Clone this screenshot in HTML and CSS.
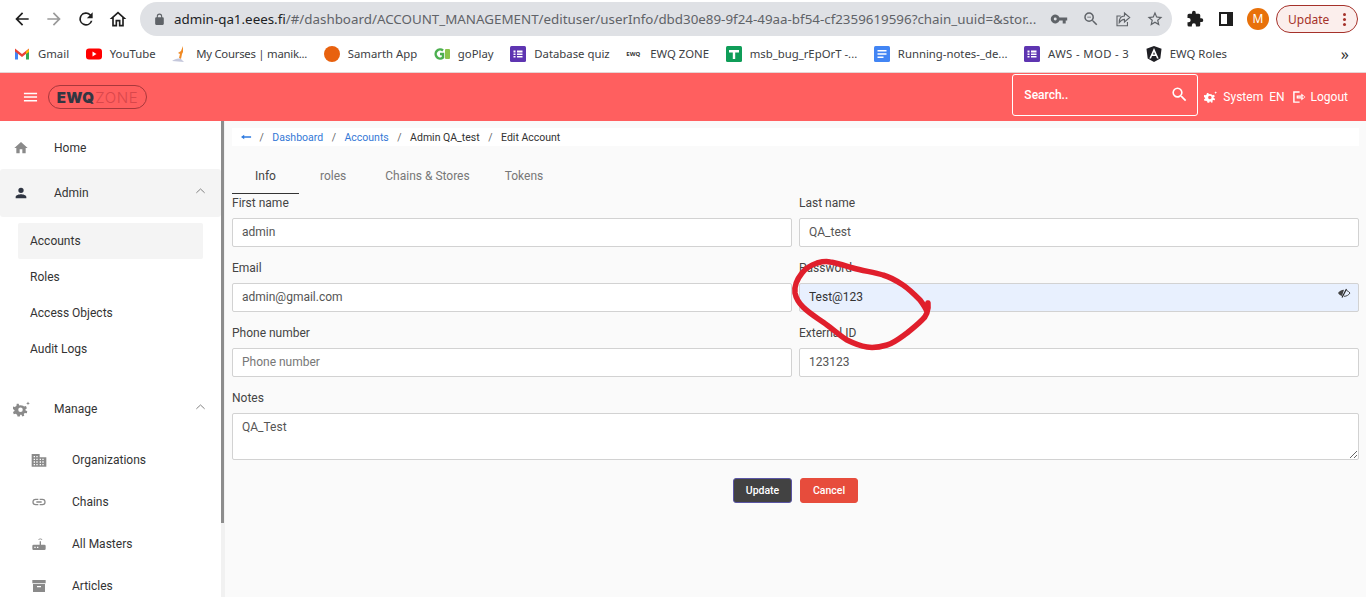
FILE: index.html
```html
<!DOCTYPE html>
<html lang="en">
<head>
    <meta charset="UTF-8">
    <meta name="viewport" content="width=device-width, initial-scale=1.0">
    <title>Edit Account</title>
    <link rel="stylesheet" href="styles.css">
</head>
<body>
    <!-- Browser toolbar -->
    <div class="toolbar">
        <div class="nav-buttons">
            <svg class="nav-icon" viewBox="0 0 24 24"><path d="M20 11H7.8l5.6-5.6L12 4l-8 8 8 8 1.4-1.4L7.8 13H20z"/></svg>
            <svg class="nav-icon nav-off" viewBox="0 0 24 24"><path d="M4 11h12.2l-5.6-5.6L12 4l8 8-8 8-1.4-1.4 5.6-5.6H4z"/></svg>
            <svg class="nav-icon" viewBox="0 0 24 24"><path d="M17.65 6.35A8 8 0 1 0 19.73 14h-2.08A6 6 0 1 1 12 6c1.66 0 3.14.69 4.22 1.78L13 11h7V4z"/></svg>
            <svg class="nav-icon" viewBox="0 0 24 24"><path d="M12 3 2 12h3v9h6v-6h2v6h6v-9h3zm5 16h-2v-6H9v6H7v-8.800l5-4.500 5 4.500z"/></svg>
        </div>
        <div class="url-bar">
            <svg class="lock" viewBox="0 0 24 24"><path d="M18 8h-1V6a5 5 0 0 0-10 0v2H6a2 2 0 0 0-2 2v10c0 1.100.9 2 2 2h12a2 2 0 0 0 2-2V10a2 2 0 0 0-2-2zM9 6a3 3 0 0 1 6 0v2H9z"/></svg>
            <span class="url-text">admin-qa1.eees.fi<span class="url-path">/#/dashboard/ACCOUNT_MANAGEMENT/edituser/userInfo/dbd30e89-9f24-49aa-bf54-cf2359619596?chain_uuid=&amp;stor...</span></span>
            <svg class="url-icon" viewBox="0 0 24 24"><path d="M12.650 10A6 6 0 1 0 12.650 14H17v4h4v-4h2v-4zM7 14a2 2 0 1 1 0-4 2 2 0 0 1 0 4z"/></svg>
            <svg class="url-icon" viewBox="0 0 24 24"><path d="M15.500 14h-.79l-.28-.27A6.470 6.470 0 0 0 16 9.500 6.500 6.500 0 1 0 9.500 16c1.610 0 3.090-.59 4.230-1.570l.27.28v.79l5 4.990L20.490 19zm-6 0C7.010 14 5 11.990 5 9.500S7.010 5 9.500 5 14 7.010 14 9.500 11.990 14 9.500 14zM7 9h5v1H7z"/></svg>
            <svg class="url-icon url-share" viewBox="0 0 24 24"><path d="M9 8H4v13h14v-5M14 4v4C9 8 7 12 7 17c2-3 4-4.500 7-4.500V16l7-6z"/></svg>
            <svg class="url-icon" viewBox="0 0 24 24"><path d="m22 9.200-7.200-.6L12 2 9.200 8.600 2 9.200l5.500 4.700L5.800 21l6.200-3.700 6.200 3.700-1.700-7.100zM12 15.400l-3.800 2.300 1-4.300-3.300-2.900 4.400-.4L12 6.100l1.700 4 4.400.4-3.300 2.900 1 4.300z"/></svg>
        </div>
        <div class="browser-actions">
            <svg class="ext-icon" viewBox="0 0 24 24"><path d="M20.500 11H19V7a2 2 0 0 0-2-2h-4V3.500a2.500 2.500 0 0 0-5 0V5H4a2 2 0 0 0-2 2v3.800h1.500a2.700 2.700 0 0 1 0 5.400H2V20a2 2 0 0 0 2 2h3.800v-1.500a2.700 2.700 0 0 1 5.400 0V22H17a2 2 0 0 0 2-2v-4h1.500a2.500 2.500 0 0 0 0-5z"/></svg>
            <span class="side-panel"></span>
            <span class="avatar">M</span>
            <span class="update-pill">Update<span class="update-dots"></span></span>
        </div>
    </div>

    <!-- Bookmarks -->
    <div class="bookmarks">
        <a class="bookmark">
            <svg class="bm-icon" viewBox="0 0 16 16"><path fill="#4285f4" d="M1 3.500 1 13.500h3V7z"/><path fill="#34a853" d="M15 3.500V13.500h-3V7z"/><path fill="#ea4335" d="M1 2.500 8 8l7-5.500V5.500L8 11 1 5.500z"/><path fill="#fbbc04" d="M12 5.500 15 3v3l-3 2z"/></svg>
            Gmail
        </a>
        <a class="bookmark">
            <svg class="bm-icon" viewBox="0 0 16 16"><rect y="2.500" width="16" height="11" rx="3" fill="#f00"/><path fill="#fff" d="m6.500 5.500 4 2.500-4 2.500z"/></svg>
            YouTube
        </a>
        <a class="bookmark bm-narrow">
            <svg class="bm-icon" viewBox="0 0 16 16"><path fill="#f08a24" d="M11 0 9 5 6 7l2 1-1 4 2 1 1-5 1-2z"/><path fill="#c5c8dc" d="M0 15c3-2 6-3 9-2l3 3z"/></svg>
            My Courses | manik...
        </a>
        <a class="bookmark">
            <svg class="bm-icon" viewBox="0 0 16 16"><circle cx="8" cy="8" r="8" fill="#e8610e"/></svg>
            Samarth App
        </a>
        <a class="bookmark">
            <svg class="bm-icon" viewBox="0 0 16 16"><path fill="none" stroke="#4caf50" stroke-width="2.500" d="M9 4.500A4.500 4.500 0 1 0 9 11.500V8H6"/><rect x="11" y="3" width="5" height="10" rx="1" fill="#8bc34a"/></svg>
            goPlay
        </a>
        <a class="bookmark">
            <svg class="bm-icon" viewBox="0 0 16 16"><rect width="16" height="16" rx="1.500" fill="#5e35b1"/><path fill="#fff" d="M3.500 4.500h2v2h-2zM7 4.500h5.500v2H7zM3.500 7.500h2v1.500h-2zM7 7.500h5.500v1.500H7zM3.500 10h2v1.500h-2zM7 10h5.500v1.500H7z"/></svg>
            Database quiz
        </a>
        <a class="bookmark">
            <span class="ewq-mini">EWQ</span>
            EWQ ZONE
        </a>
        <a class="bookmark">
            <svg class="bm-icon" viewBox="0 0 16 16"><rect width="16" height="16" rx="1.500" fill="#0f9d58"/><path fill="#fff" d="M3 4h10v2.500H9.200V13H6.800V6.500H3z"/></svg>
            msb_bug_rEpOrT -...
        </a>
        <a class="bookmark">
            <svg class="bm-icon" viewBox="0 0 16 16"><rect width="16" height="16" rx="1.500" fill="#4285f4"/><path fill="#fff" d="M3.500 4h9v1.500h-9zM3.500 7.200h9v1.500h-9zM3.500 10.400h6v1.500h-6z"/></svg>
            Running-notes-_de...
        </a>
        <a class="bookmark bm-wide">
            <svg class="bm-icon" viewBox="0 0 16 16"><rect width="16" height="16" rx="1.500" fill="#5e35b1"/><path fill="#fff" d="M3.500 4.500h2v2h-2zM7 4.500h5.500v2H7zM3.500 7.500h2v1.500h-2zM7 7.500h5.500v1.500H7zM3.500 10h2v1.500h-2zM7 10h5.500v1.500H7z"/></svg>
            AWS - MOD - 3
        </a>
        <a class="bookmark">
            <svg class="bm-icon" viewBox="0 0 16 16"><path fill="#1f1f24" d="M8 0 .5 2.700l1.200 9.900L8 16l6.300-3.400 1.200-9.900z"/><path fill="#fff" d="M8 2 3.300 12.500H5l1-2.500h4l1 2.500h1.700zM7 8.500l1-2.500 1 2.500z"/></svg>
            EWQ Roles
        </a>
        <span class="bookmarks-more">»</span>
    </div>

    <!-- App header -->
    <header class="app-header">
        <svg class="menu-icon" viewBox="0 0 16 12"><path d="M1 1.500h14v1.600H1zM1 5.300h14v1.600H1zM1 9.100h14v1.600H1z"/></svg>
        <div class="logo"><b>EWQ</b><span>ZONE</span></div>
        <div class="search-box">
            <span>Search..</span>
            <svg class="search-icon" viewBox="0 0 24 24"><path d="M15.500 14h-.79l-.28-.27A6.470 6.470 0 0 0 16 9.500 6.500 6.500 0 1 0 9.500 16c1.610 0 3.090-.59 4.230-1.570l.27.28v.79l5 4.990L20.490 19zm-6 0C7.010 14 5 11.990 5 9.500S7.010 5 9.500 5 14 7.010 14 9.500 11.990 14 9.500 14z"/></svg>
        </div>
        <svg class="head-icon gear-icon" viewBox="0 0 24 24"><path d="M10 7a7 7 0 0 0-1.700.3L7.500 5H5l-.5 2.900-2.200 1.300L0 8.500 0 12l2 1.500v1L0 16l1 3 2.500-.6 2 1.300L6 22h3l.7-2.300h1.600L12.500 22l2.500-1-.6-2.500 1.300-1.300 2.800.3.500-2.500L16.500 13.500v-1l2-1.500-1.200-3-2.600.8-1.200-1.100zM10 10a3 3 0 1 1 0 6 3 3 0 0 1 0-6zM20 2l.7 1.800L22.500 4.500l-1.800.7L20 7l-.7-1.800-1.800-.7 1.800-.7z"/></svg>
        <span class="head-link system-link">System</span>
        <span class="head-link lang-link">EN</span>
        <svg class="head-icon logout-icon" viewBox="0 0 24 24"><path d="M2 2h11v2.500H4.500v15H13V22H2zM16 6l7 6-7 6v-3.500H8v-5h8zM10 11.500v1h8.500v2l3-2.500-3-2.500v2z" fill-rule="evenodd"/></svg>
        <span class="head-link">Logout</span>
    </header>

    <div class="app-body">
        <!-- Sidebar -->
        <aside class="sidebar">
            <a class="nav-item nav-home">
                <svg class="nav-glyph" viewBox="0 0 24 24"><path d="M10 20v-6h4v6h5v-8h3L12 3 2 12h3v8z"/></svg>
                Home
            </a>
            <a class="nav-item nav-open">
                <svg class="nav-glyph glyph-dark" viewBox="0 0 24 24"><path d="M12 12a4 4 0 1 0 0-8 4 4 0 0 0 0 8zm0 2c-2.700 0-8 1.300-8 4v2h16v-2c0-2.700-5.300-4-8-4z"/></svg>
                Admin
                <svg class="chevron" viewBox="0 0 12 8"><path d="M1.500 6 6 1.800 10.500 6"/></svg>
            </a>
            <div class="sub-list">
                <a class="sub-item sub-active">Accounts</a>
                <a class="sub-item">Roles</a>
                <a class="sub-item">Access Objects</a>
                <a class="sub-item">Audit Logs</a>
            </div>
            <a class="nav-item nav-manage">
                <svg class="nav-glyph gear-glyph" viewBox="0 0 24 24"><path d="M10 7a7 7 0 0 0-1.700.3L7.500 5H5l-.5 2.900-2.200 1.300L0 8.500 0 12l2 1.500v1L0 16l1 3 2.500-.6 2 1.300L6 22h3l.7-2.300h1.600L12.500 22l2.500-1-.6-2.500 1.300-1.300 2.800.3.500-2.500L16.500 13.500v-1l2-1.500-1.200-3-2.600.8-1.200-1.100zM10 10a3 3 0 1 1 0 6 3 3 0 0 1 0-6zM20 2l.7 1.800L22.500 4.500l-1.800.7L20 7l-.7-1.800-1.800-.7 1.800-.7z"/></svg>
                Manage
                <svg class="chevron" viewBox="0 0 12 8"><path d="M1.500 6 6 1.800 10.500 6"/></svg>
            </a>
            <a class="manage-item">
                <svg class="nav-glyph" viewBox="0 0 24 24"><path fill-rule="evenodd" d="M1 3h12v5h10v14H1zM4 6v2h2V6zm4 0v2h2V6zM4 10v2h2v-2zm4 0v2h2v-2zm5 0v2h2v-2zm4 0v2h2v-2zM4 14v2h2v-2zm4 0v2h2v-2zm5 0v2h2v-2zm4 0v2h2v-2zM4 18v2h2v-2zm4 0v2h2v-2zm5 0v2h2v-2zm4 0v2h2v-2z"/></svg>
                Organizations
            </a>
            <a class="manage-item">
                <svg class="nav-glyph" viewBox="0 0 24 24"><path d="M3.900 12A3.100 3.100 0 0 1 7 8.900h4V7H7a5 5 0 0 0 0 10h4v-1.900H7A3.100 3.100 0 0 1 3.900 12zM8 13h8v-2H8zm9-6h-4v1.900h4a3.100 3.100 0 0 1 0 6.200h-4V17h4a5 5 0 0 0 0-10z"/></svg>
                Chains
            </a>
            <a class="manage-item">
                <svg class="nav-glyph" viewBox="0 0 24 24"><path d="M16 13h-1V8h-2v5H4a2 2 0 0 0-2 2v4c0 1.100.9 2 2 2h16a2 2 0 0 0 2-2v-4a2 2 0 0 0-2-2zM7 18H5v-2h2zm4 0H9v-2h2zm3-13c1 0 1.700.3 2.300.9l.8-.8A4.300 4.300 0 0 0 14 3.800c-1.200 0-2.300.5-3.100 1.300l.8.8C12.300 5.300 13 5 14 5z"/></svg>
                All Masters
            </a>
            <a class="manage-item">
                <svg class="nav-glyph" viewBox="0 0 24 24"><path d="M2 3h20v5H2zM3 9h18v12H3zm6 3v2h6v-2z" fill-rule="evenodd"/></svg>
                Articles
            </a>
        </aside>
        <div class="side-scrollbar"><div class="side-thumb"></div></div>

        <!-- Main content -->
        <main class="content">
            <div class="breadcrumb">
                <svg class="back-arrow" viewBox="0 0 12 8"><path d="M0 4 3.500 1.500V3.300H11v1.400H3.500V6.500z"/></svg>
                <span class="crumb-sep">/</span>
                <a class="crumb-link">Dashboard</a>
                <span class="crumb-sep">/</span>
                <a class="crumb-link">Accounts</a>
                <span class="crumb-sep">/</span>
                <span>Admin QA_test</span>
                <span class="crumb-sep">/</span>
                <span>Edit Account</span>
            </div>

            <div class="tabs">
                <a class="tab tab-active">Info</a>
                <a class="tab tab-roles">roles</a>
                <a class="tab tab-chains">Chains &amp; Stores</a>
                <a class="tab tab-tokens">Tokens</a>
            </div>

            <form class="account-form">
                <div class="field">
                    <label>First name</label>
                    <input type="text" value="admin">
                </div>
                <div class="field">
                    <label>Last name</label>
                    <input type="text" value="QA_test">
                </div>
                <div class="field">
                    <label>Email</label>
                    <input type="text" value="admin@gmail.com">
                </div>
                <div class="field password-field">
                    <label>Password</label>
                    <input class="input-filled" type="text" value="Test@123">
                    <svg class="eye-icon" viewBox="0 0 14 12">
                        <path class="eye-half" d="M1 6c1.300-2 3.300-3.300 6-3.300L5 9C3.300 8.600 2 7.500 1 6z"/>
                        <path class="eye-line" d="M9.500 3.400C11 4 12.200 5 13 6c-1.300 2-3.300 3.300-6 3.300"/>
                        <path class="eye-slash" d="M9.500 2 5 10.500"/>
                    </svg>
                </div>
                <div class="field">
                    <label>Phone number</label>
                    <input type="text" placeholder="Phone number">
                </div>
                <div class="field">
                    <label>External ID</label>
                    <input type="text" value="123123">
                </div>
                <div class="field field-wide">
                    <label>Notes</label>
                    <textarea>QA_Test</textarea>
                </div>
                <div class="form-actions">
                    <button type="button" class="btn btn-update">Update</button>
                    <button type="button" class="btn btn-cancel">Cancel</button>
                </div>
            </form>
        </main>
    </div>

    <!-- Hand drawn mark over the password field -->
    <svg class="scribble" viewBox="790 258 145 95">
        <path d="M928 303C929 310 926 317 922 320C917 325 912 329 907 333C900 338 894 343 887 345C880 347 873 348 867 347C860 346 853 343 847 340C840 336 834 330 827 325C819 319 810 314 803 307C799 303 796 298 795 293C794 286 798 278 802 273C806 268 811 265 817 263C821 262 826 261 830 262C838 263 846 266 853 268C863 271 874 272 883 275C890 277 897 281 903 285C909 289 915 295 920 300C923 304 926 308 927 312"/>
    </svg>
</body>
</html>
```

FILE: styles.css
```css
* {
    box-sizing: border-box;
}
html, body {
    height: 100%;
}
body {
    margin: 0;
    height: 597px;
    overflow: hidden;
    position: relative;
    display: flex;
    flex-direction: column;
    font-family: Roboto, Arial, sans-serif;
    font-size: 12px;
    color: #333;
    background: #fff;
}
a {
    color: inherit;
    text-decoration: none;
}

/* Browser toolbar */
.toolbar {
    height: 36px;
    flex: none;
    display: flex;
    align-items: stretch;
    padding-top: 2px;
    font-family: "Noto Sans", Arial, sans-serif;
}
.nav-buttons {
    width: 140px;
    display: flex;
    align-items: center;
    padding-left: 12px;
    gap: 12px;
}
.nav-icon {
    width: 20px;
    height: 20px;
    fill: #1f1f1f;
}
.nav-off {
    fill: #9a9a9a;
}
.url-bar {
    width: 1032px;
    display: flex;
    align-items: center;
    padding: 0 8px 0 13px;
    background: #dfe1e5;
    border-radius: 17px;
}
.lock {
    width: 13px;
    height: 13px;
    fill: #5f6368;
    margin-right: 8px;
}
.url-text {
    flex: 1;
    font-size: 13.370px;
    color: #202124;
    white-space: nowrap;
}
.url-path {
    color: #5f6368;
}
.url-icon {
    width: 18px;
    height: 18px;
    fill: #5f6368;
    margin-left: 14px;
}
.url-share {
    fill: none;
    stroke: #5f6368;
    stroke-width: 1.500;
}
.browser-actions {
    flex: 1;
    display: flex;
    align-items: center;
    padding-left: 14px;
}
.ext-icon {
    width: 18px;
    height: 18px;
    fill: #1f1f1f;
    margin-right: 15px;
}
.side-panel {
    width: 14px;
    height: 14px;
    border: 2px solid #1f1f1f;
    border-right-width: 6px;
    margin-right: 14px;
}
.avatar {
    width: 22px;
    height: 22px;
    border-radius: 50%;
    background: #e8710a;
    color: #fff;
    font-size: 12px;
    text-align: center;
    line-height: 22px;
    margin-right: 7px;
}
.update-pill {
    width: 82px;
    height: 28px;
    display: flex;
    align-items: center;
    padding-left: 11px;
    border: 1px solid #a5312a;
    border-radius: 14px;
    background: #fbeeec;
    color: #a5312a;
    font-size: 12px;
    position: relative;
}
.update-dots {
    position: absolute;
    right: 11px;
    top: 7px;
    width: 3px;
    height: 3px;
    border-radius: 50%;
    background: #a5312a;
    box-shadow: 0 5px 0 #a5312a, 0 10px 0 #a5312a;
}

/* Bookmarks */
.bookmarks {
    height: 37px;
    flex: none;
    display: flex;
    align-items: center;
    gap: 16.600px;
    padding: 0 17px 1px 14px;
    border-bottom: 1px solid #e6d5d5;
    font-family: "Noto Sans", Arial, sans-serif;
    font-size: 11.350px;
    color: #3c4043;
    white-space: nowrap;
}
.bookmark {
    display: flex;
    align-items: center;
    gap: 8px;
}
.bm-narrow {
    letter-spacing: -0.250px;
}
.bm-wide {
    letter-spacing: 0.350px;
}
.bm-icon {
    width: 16px;
    height: 16px;
}
.ewq-mini {
    width: 16px;
    font-size: 6px;
    font-weight: 700;
    color: #333;
}
.bookmarks-more {
    margin-left: auto;
    font-size: 16px;
    color: #333;
}

/* App header */
.app-header {
    height: 48px;
    flex: none;
    display: flex;
    align-items: center;
    background: #ff5f5f;
    color: #fff;
    padding-left: 23px;
}
.menu-icon {
    width: 15px;
    height: 12px;
    fill: #fff;
    margin-right: 10px;
}
.logo {
    width: 99px;
    height: 24px;
    display: flex;
    align-items: center;
    justify-content: center;
    border: 1.500px solid #a8383c;
    border-radius: 12px;
    font-family: Inter, Arial, sans-serif;
    font-size: 15px;
    line-height: 1;
}
.logo b {
    color: #333642;
    font-weight: 900;
    letter-spacing: 0.300px;
    margin-right: 1px;
}
.logo span {
    color: #d9474b;
    font-weight: 300;
    letter-spacing: 0.600px;
}
.search-box {
    width: 186px;
    height: 42px;
    margin-left: auto;
    margin-right: 6px;
    margin-bottom: 5px;
    display: flex;
    align-items: center;
    justify-content: space-between;
    padding: 0 11px;
    border: 1px solid #fff;
    border-radius: 3px;
    font-weight: 500;
}
.search-icon {
    width: 19px;
    height: 19px;
    margin-right: -3px;
    fill: #fff;
}
.head-icon {
    width: 14px;
    height: 14px;
    fill: #fff;
    margin-right: 5px;
}
.head-link {
    font-size: 12px;
    margin-right: 18px;
}
.system-link {
    margin-right: 6px;
}
.lang-link {
    margin-right: 7px;
}

/* Page body */
.app-body {
    flex: 1;
    min-height: 0;
    display: flex;
}
.sidebar {
    width: 221px;
    flex: none;
    overflow: hidden;
    background: #fff;
}
.side-scrollbar {
    width: 4px;
    flex: none;
    background: #f1f1f1;
}
.side-thumb {
    width: 3px;
    height: 402px;
    background: #8d8d8d;
}
.nav-item {
    height: 48px;
    display: flex;
    align-items: center;
    padding-left: 13px;
    position: relative;
}
.nav-home {
    padding-top: 6px;
}
.nav-open {
    background: #f4f4f4;
    border-radius: 3px;
}
.nav-manage {
    margin-top: 18px;
    margin-bottom: 6px;
}
.nav-glyph {
    width: 16px;
    height: 16px;
    margin-right: 25px;
    fill: #8a8a8a;
    flex: none;
}
.glyph-dark {
    fill: #2f3542;
}
.gear-glyph {
    width: 18px;
    height: 18px;
    margin-right: 23px;
}
.chevron {
    position: absolute;
    right: 15px;
    top: 18px;
    width: 11px;
    height: 8px;
    fill: none;
    stroke: #777;
    stroke-width: 1;
}
.sub-list {
    padding: 6px 18px 0;
}
.sub-item {
    height: 36px;
    display: flex;
    align-items: center;
    padding-left: 12px;
}
.sub-active {
    background: #f4f4f4;
    border-radius: 2px;
}
.manage-item {
    height: 42px;
    display: flex;
    align-items: center;
    padding-left: 31px;
}

/* Main content */
.content {
    flex: 1;
    min-width: 0;
    background: #fafafa;
    padding: 7px 7px 0;
}
.breadcrumb {
    height: 18px;
    display: flex;
    align-items: center;
    gap: 7px;
    padding-left: 9px;
    background: #fff;
    font-size: 10.500px;
    color: #333;
}
.back-arrow {
    width: 11px;
    height: 8px;
    margin-right: -1px;
    fill: #2f7be0;
}
.crumb-sep {
    color: #666;
    margin: 0 1.500px;
}
.crumb-link {
    color: #3478d6;
}
.tabs {
    height: 48px;
    display: flex;
    align-items: center;
    color: #777;
}
.tab {
    height: 100%;
    display: flex;
    align-items: center;
    padding-top: 12px;
}
.tab-active {
    width: 67px;
    justify-content: center;
    color: #444;
    border-bottom: 1px solid #333;
}
.tab-roles {
    margin-left: 21px;
}
.tab-chains {
    margin-left: 39px;
}
.tab-tokens {
    margin-left: 35px;
}
.account-form {
    display: grid;
    grid-template-columns: 1fr 1fr;
    column-gap: 7px;
}
.field {
    position: relative;
    display: flex;
    flex-direction: column;
}
.field-wide {
    grid-column: 1 / 3;
}
.field label {
    height: 24px;
    padding-top: 1px;
    line-height: 16px;
    color: #444;
}
.field input,
.field textarea {
    width: 100%;
    height: 29px;
    margin-bottom: 12px;
    padding: 0 9px 2px;
    border: 1px solid #d2d2d2;
    border-radius: 2px;
    background: #fff;
    font-family: Roboto, Arial, sans-serif;
    font-size: 12px;
    color: #555;
    outline: none;
}
.field input::placeholder {
    color: #777;
}
.field textarea {
    height: 47px;
    margin-bottom: 18px;
    padding-top: 6px;
    line-height: 14px;
}
.field .input-filled {
    background: #e8f0fe;
    color: #333;
}
.eye-icon {
    position: absolute;
    right: 8px;
    top: 28px;
    width: 14px;
    height: 12px;
}
.eye-half {
    fill: #444;
}
.eye-line {
    fill: none;
    stroke: #444;
    stroke-width: 1;
}
.eye-slash {
    fill: none;
    stroke: #222;
    stroke-width: 1.200;
}
.form-actions {
    grid-column: 1 / 3;
    display: flex;
    justify-content: center;
    gap: 8px;
}
.btn {
    height: 25px;
    border-radius: 3px;
    color: #fff;
    font-family: Roboto, Arial, sans-serif;
    font-size: 10.500px;
    font-weight: 500;
    padding: 0;
}
.btn-update {
    width: 59px;
    background: #424242;
    border: 1px solid #5a55a5;
}
.btn-cancel {
    width: 58px;
    background: #e74c3c;
    border: 1px solid #e74c3c;
}

/* Marker drawn on the screenshot */
.scribble {
    position: absolute;
    left: 790px;
    top: 258px;
    width: 145px;
    height: 95px;
    fill: none;
    stroke: #e01f2c;
    stroke-width: 5.500;
    stroke-linecap: round;
    stroke-linejoin: round;
}
```
